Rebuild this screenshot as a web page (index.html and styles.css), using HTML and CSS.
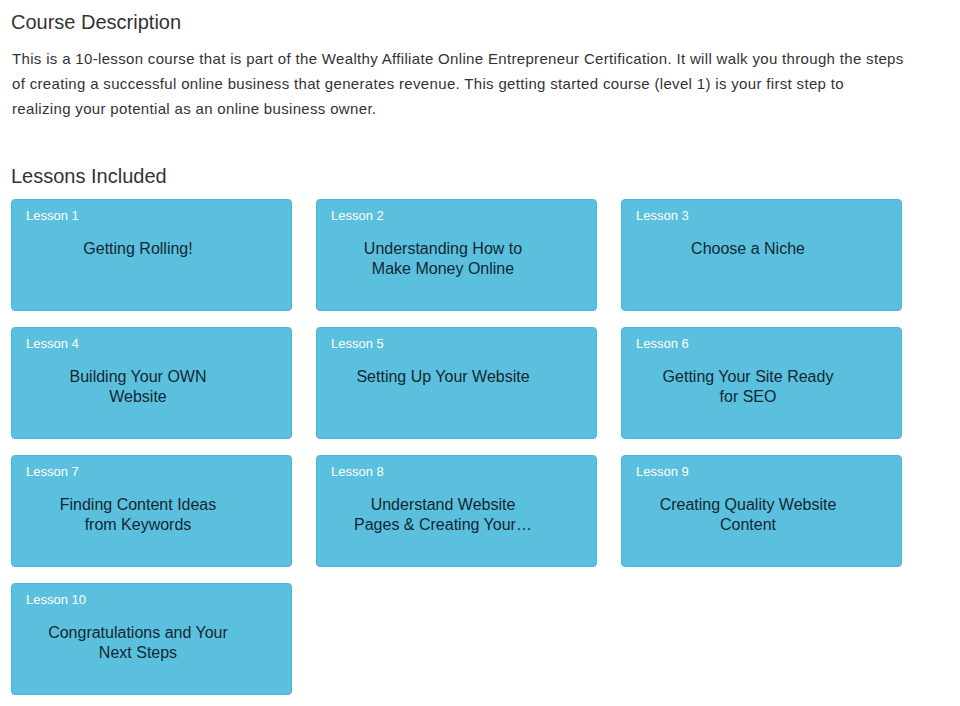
FILE: index.html
```html
<!DOCTYPE html>
<html lang="en">

<head>
    <meta charset="UTF-8">
    <meta name="viewport" content="width=device-width, initial-scale=1.0">
    <title>Course Description</title>
    <link rel="stylesheet" href="styles.css">
</head>

<body>

    <div class="course">
        <h2>Course Description</h2>
        <p class="description">This is a 10-lesson course that is part of the Wealthy Affiliate Online Entrepreneur Certification. It will walk you through the steps of creating a successful online business that generates revenue. This getting started course (level 1) is your first step to realizing your potential as an online business owner.</p>

        <h2 class="lessons-title">Lessons Included</h2>
        <div class="lessons">
            <div class="lesson">
                <span class="lesson-num">Lesson 1</span>
                <div class="lesson-name">Getting Rolling!</div>
            </div>
            <div class="lesson">
                <span class="lesson-num">Lesson 2</span>
                <div class="lesson-name">Understanding How to Make Money Online</div>
            </div>
            <div class="lesson">
                <span class="lesson-num">Lesson 3</span>
                <div class="lesson-name">Choose a Niche</div>
            </div>
            <div class="lesson">
                <span class="lesson-num">Lesson 4</span>
                <div class="lesson-name">Building Your OWN Website</div>
            </div>
            <div class="lesson">
                <span class="lesson-num">Lesson 5</span>
                <div class="lesson-name">Setting Up Your Website</div>
            </div>
            <div class="lesson">
                <span class="lesson-num">Lesson 6</span>
                <div class="lesson-name">Getting Your Site Ready for SEO</div>
            </div>
            <div class="lesson">
                <span class="lesson-num">Lesson 7</span>
                <div class="lesson-name">Finding Content Ideas from Keywords</div>
            </div>
            <div class="lesson">
                <span class="lesson-num">Lesson 8</span>
                <!-- title is truncated on the page -->
                <div class="lesson-name">Understand Website Pages &amp; Creating Your…</div>
            </div>
            <div class="lesson">
                <span class="lesson-num">Lesson 9</span>
                <div class="lesson-name">Creating Quality Website Content</div>
            </div>
            <div class="lesson">
                <span class="lesson-num">Lesson 10</span>
                <div class="lesson-name">Congratulations and Your Next Steps</div>
            </div>
        </div>
    </div>

</body>

</html>
```

FILE: styles.css
```css
body {
    margin: 0;
    font-family: 'Liberation Sans', Arial, sans-serif;
    color: #333;
    background: #fff;
}

.course {
    width: 893px;
    padding: 10px 0 0 11px;
}

h2 {
    margin: 0;
    font-size: 20px;
    font-weight: normal;
    line-height: 24px;
}

.description {
    margin: 12px 0 0 1px;
    font-size: 15px;
    line-height: 25px;
    letter-spacing: 0.33px;
}

.lessons-title {
    margin-top: 43px;
}

.lessons {
    display: grid;
    grid-template-columns: repeat(3, 281px);
    column-gap: 24px;
    row-gap: 16px;
    margin-top: 11px;
}

.lesson {
    height: 112px;
    box-sizing: border-box;
    background: #5bc0de;
    border: 1px solid #4fb5d6;
    border-radius: 4px;
    padding: 8px 14px;
}

.lesson-num {
    display: block;
    color: #fff;
    font-size: 13px;
    line-height: 16px;
}

.lesson-num + .lesson-name {
    margin-top: 15px;
}

.lesson-name {
    width: 186px;
    margin-left: 19px;
    text-align: center;
    color: #142733;
    font-size: 16px;
    line-height: 20px;
}
```
